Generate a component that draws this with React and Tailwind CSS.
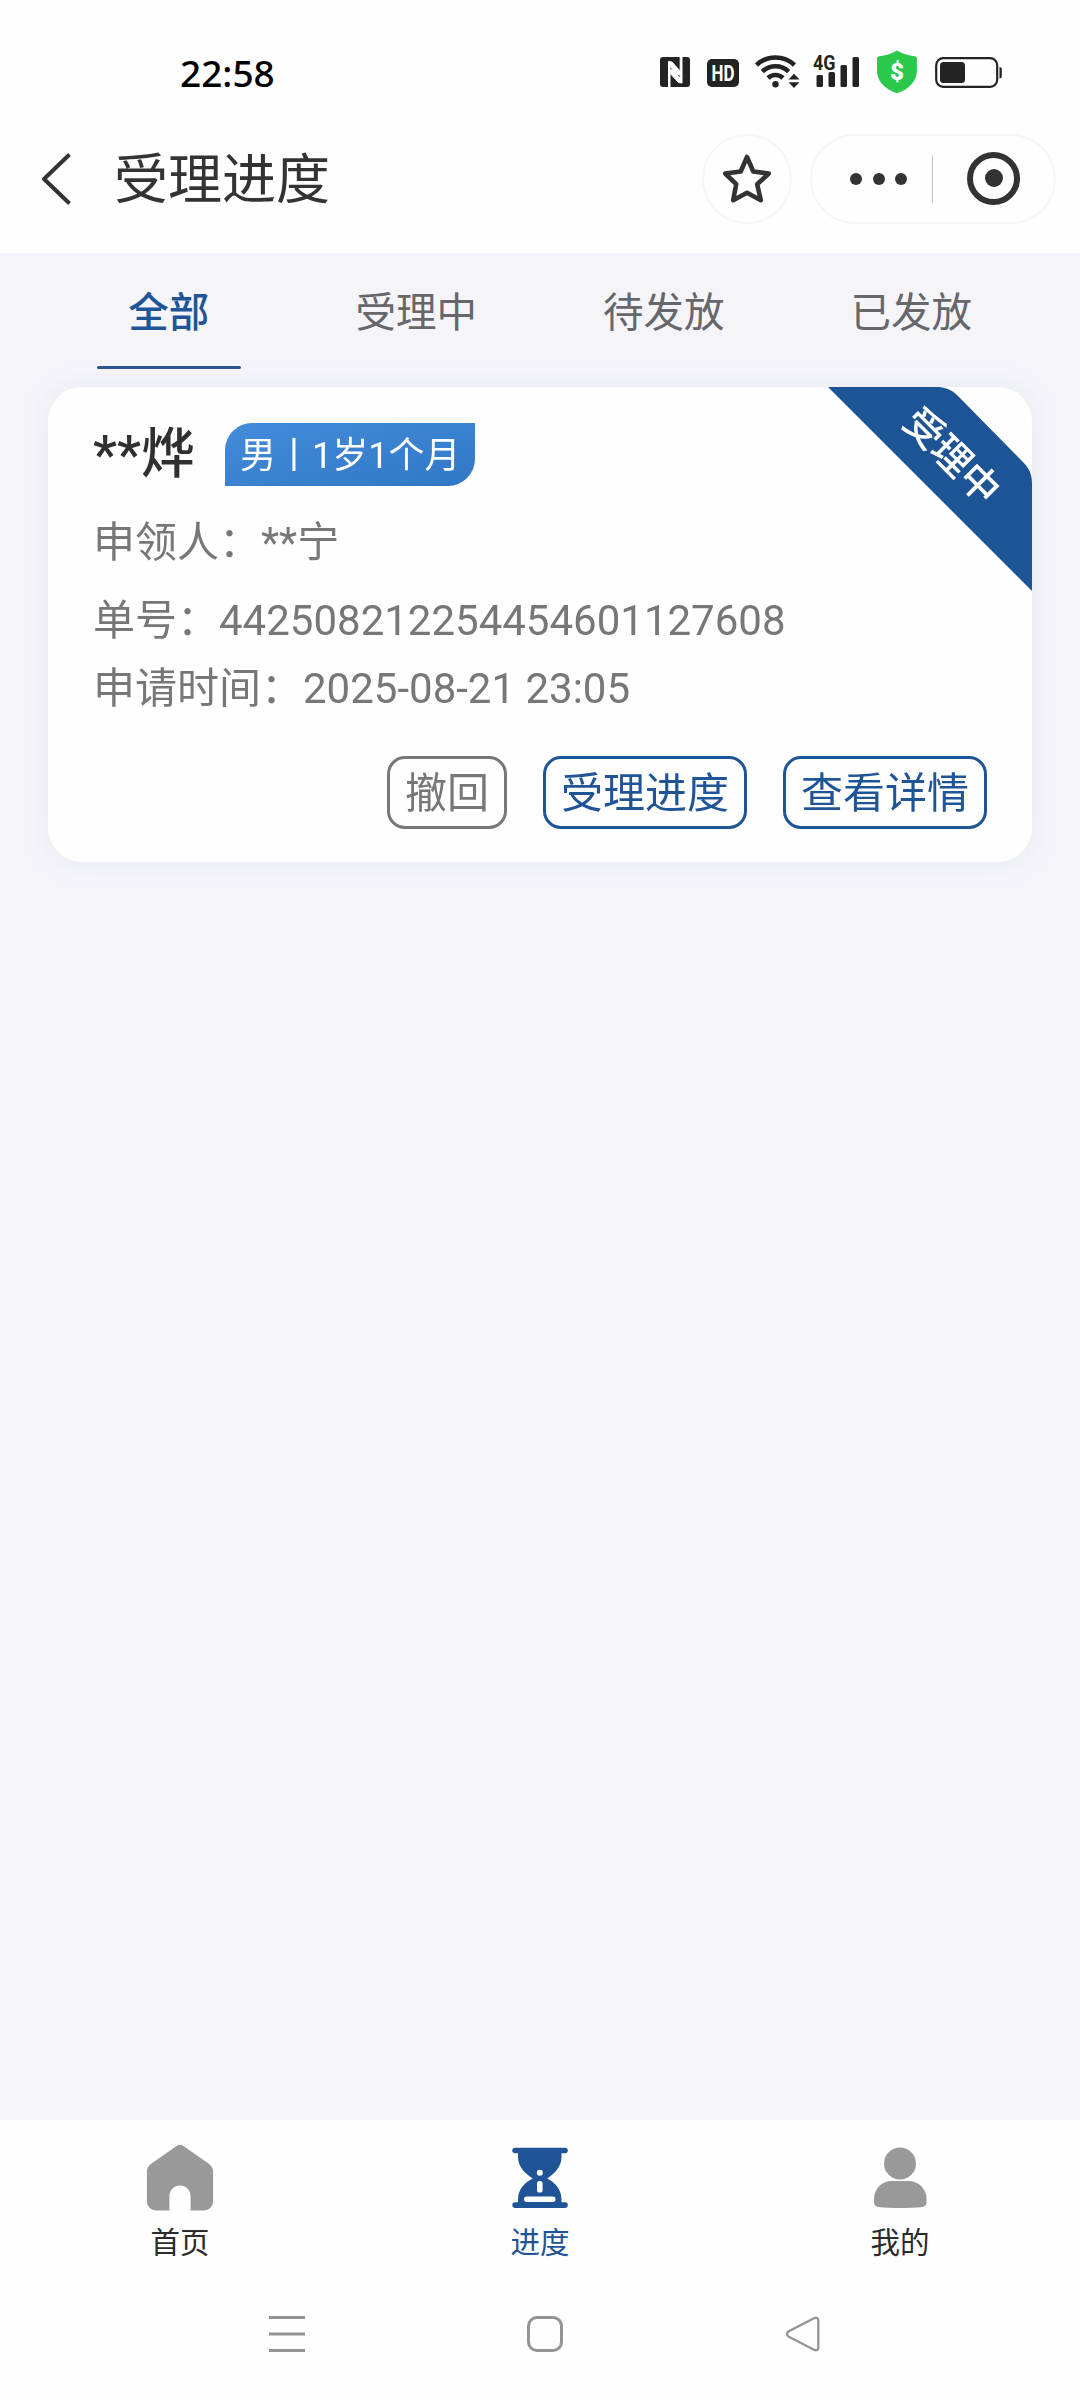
import React from "react";

const BLUE = "#1f5597";

function StatusIcons() {
  return (
    <svg className="block" width="344" height="46" viewBox="660 49 344 46">
      {/* NFC */}
      <rect x="660" y="57" width="30" height="30" rx="3" fill="#232323" />
      <path d="M668.500 87V61.500L672 62l8 9v4l-3-1-7-7.500V87zM682 57V83l-3.500-.5-7.800-8.500v-4.500l3 1.500 6.500 7V57z" fill="#fff" stroke="#fff" strokeWidth="1" />
      {/* HD */}
      <rect x="707" y="59" width="32" height="28" rx="5" fill="#232323" />
      <text x="723" y="80.8" textAnchor="middle" fontFamily="Roboto, sans-serif" fontWeight="700" fontSize="21.5" textLength="23" lengthAdjust="spacingAndGlyphs" fill="#fff">HD</text>
      {/* Wi-Fi */}
      <g fill="none" stroke="#232323" strokeWidth="4.500">
        <path d="M756.5 65a27.5 27.5 0 0 1 38 0" />
        <path d="M762.3 71.600a19 19 0 0 1 26.4 0" />
        <path d="M768 78a11 11 0 0 1 15 0" />
      </g>
      <circle cx="775.5" cy="84.3" r="3.200" fill="#232323" />
      <path d="M788.500 79.5l5.500-5.8 5.500 5.8zM788.500 82.2l5.500 5.8 5.500-5.8z" fill="#232323" />
      {/* Signal */}
      <text x="813" y="70.4" fontFamily="Roboto, sans-serif" fontWeight="700" fontSize="20.5" textLength="22.5" lengthAdjust="spacingAndGlyphs" fill="#232323">4G</text>
      <g fill="#232323">
        <rect x="816.5" y="75" width="6.500" height="12" rx="1.5" />
        <rect x="828.5" y="72" width="6.500" height="15" rx="1.5" />
        <rect x="840.5" y="65" width="6.500" height="22" rx="1.5" />
        <rect x="852.5" y="57" width="6.500" height="30" rx="1.5" />
      </g>
      {/* Payment shield */}
      <path d="M897 50.5c5.500 3.500 12 5.200 17.500 5.700 1.500.2 2.400 1 2.400 2.600V71c0 10-7.500 18-19.900 22.300C884.600 89 877 81 877 71V58.800c0-1.600.9-2.400 2.400-2.600 5.600-.5 12.100-2.200 17.600-5.700z" fill="#2ac94c" />
      <text x="897" y="79.800" textAnchor="middle" fontFamily="Roboto, sans-serif" fontWeight="900" fontSize="24" fill="#fff">$</text>
      {/* Battery */}
      <rect x="936.200" y="58.200" width="61" height="28.600" rx="7" fill="none" stroke="#232323" strokeWidth="2.200" />
      <rect x="940" y="62" width="25" height="21" rx="3.500" fill="#232323" />
      <path d="M999.500 67c1.600 0 2.300 1 2.300 2.200v7c0 1.200-.7 2.200-2.300 2.200z" fill="#232323" />
    </svg>
  );
}

function Header() {
  return (
    <header className="h-[253px] bg-[#fefefe]">
      <div className="flex h-[112px] items-start justify-between pl-[180px] pr-[76px] pt-[49px]">
        <span className="font-['Noto_Sans'] text-[37px] font-medium leading-[47px] text-black">22:58</span>
        <StatusIcons />
      </div>
      <div className="flex h-[134px] items-center pl-[40px] pr-[24px]">
        <svg className="block" width="34" height="52" viewBox="0 0 34 52">
          <path d="M29.500 1.500L4 26l25.500 24.500" fill="none" stroke="#333" strokeWidth="4" strokeLinejoin="round" />
        </svg>
        <h1 className="ml-[40px] pt-[3px] text-[54px] leading-[60px] text-[#333]">受理进度</h1>
        <div className="ml-auto flex gap-[18px]">
          <button className="grid size-[90px] place-items-center rounded-full border-2 border-[#f6f6f6]">
            <svg className="block" width="54" height="54" viewBox="0 0 54 54">
              <path d="M27 5l6.300 14.500 15.500 2-11.600 10.700 3.600 16L27 40.800l-13.800 7.400 3-16L5.200 21.500l15.500-2z" fill="none" stroke="#333" strokeWidth="4.600" strokeLinejoin="round" />
            </svg>
          </button>
          <div className="flex h-[90px] w-[246px] items-center rounded-full border-2 border-[#f6f6f6] pl-[38px]">
            <div className="flex gap-[10.500px]">
              <i className="size-3 rounded-full bg-[#333]" />
              <i className="size-3 rounded-full bg-[#333]" />
              <i className="size-3 rounded-full bg-[#333]" />
            </div>
            <i className="ml-[25px] h-12 w-px bg-[#c4c4c4]" />
            <div className="-mt-[2px] ml-[34px] grid size-[53px] place-items-center rounded-full border-[6px] border-[#333]">
              <i className="size-[18px] rounded-full bg-[#333]" />
            </div>
          </div>
        </div>
      </div>
    </header>
  );
}

function Tabs() {
  const tabs = ["全部", "受理中", "待发放", "已发放"];
  return (
    <nav className="grid h-[134px] grid-cols-4 px-[45px]">
      {tabs.map((t, i) => (
        <div key={t} className={"flex flex-col items-center pt-[30px] text-[40.500px] leading-[60px] " + (i === 0 ? "font-medium text-[#1f5597]" : "text-[#66666b]")}>
          <span>{t}</span>
          {i === 0 && <i className="mt-[23px] h-[3px] w-[144px] rounded-full bg-[#2a5590]" />}
        </div>
      ))}
    </nav>
  );
}

function Ribbon() {
  return (
    <div className="absolute right-0 top-0 h-[204px] w-[204px]">
      <svg className="block" width="204" height="204" viewBox="0 0 204 204">
        <path d="M0 0H108c9 0 15.500 2.500 22 9L193 73c7.500 7.500 11 13 11 23V204z" fill="#1d5496" />
      </svg>
      <span className="absolute left-[123px] top-[70px] -translate-x-1/2 -translate-y-1/2 rotate-45 whitespace-nowrap text-[39px] font-medium leading-none text-white">受理中</span>
    </div>
  );
}

function Button({ children, muted }) {
  return (
    <button className={"h-[73px] rounded-[18px] border-[3px] px-[15px] text-[42px] leading-[69px] " + (muted ? "border-[#757779] text-[#757779]" : "border-[#1f5597] text-[#1f5597]")}>
      {children}
    </button>
  );
}

function Card() {
  return (
    <section className="relative mx-12 h-[475px] overflow-hidden rounded-[34px] bg-[#fefefe] pl-[45px] pr-[45px] pt-[36px]">
      <Ribbon />
      <div className="flex h-[63px] items-center">
        <h2 className="w-[132px] text-[54px] font-medium leading-[60px] text-[#303030]">**烨</h2>
        <span className="h-[63px] w-[250px] rounded-br-[27px] rounded-tl-[27px] bg-linear-to-br from-[#448cdb] to-[#3078c6] pl-[15px] text-[36px] leading-[66px] text-white">男丨1岁1个月</span>
      </div>
      <dl className="text-[42px] text-[#757779]">
        <div className="mt-[24px] flex leading-[66px]"><dt>申领人：</dt><dd>**宁</dd></div>
        <div className="mt-[12px] flex leading-[66px]"><dt>单号：</dt><dd>442508212254454601127608</dd></div>
        <div className="mt-[2px] flex leading-[66px]"><dt>申请时间：</dt><dd>2025-08-21 23:05</dd></div>
      </dl>
      <div className="mt-[34px] flex justify-end gap-[36px]">
        <Button muted>撤回</Button>
        <Button>受理进度</Button>
        <Button>查看详情</Button>
      </div>
    </section>
  );
}

function HomeIcon() {
  return (
    <svg className="block" width="72" height="72" viewBox="0 0 72 72">
      <path d="M33 4.800a5 5 0 0 1 6 0L64.500 22.500c3 2.200 4.600 5 4.600 8.500V60.500a9 9 0 0 1-9 9H46.600V55a10.600 10.600 0 0 0-21.200 0V69.500H11.900a9 9 0 0 1-9-9V31c0-3.500 1.600-6.300 4.600-8.500z" fill="#999" />
    </svg>
  );
}

function HourglassIcon() {
  return (
    <svg className="block" width="72" height="72" viewBox="0 0 72 72">
      <g fill={BLUE}>
        <rect x="8.300" y="6.700" width="55.500" height="5.600" rx="2.800" />
        <rect x="8.300" y="61.300" width="55.500" height="5.600" rx="2.800" />
        <path d="M14 9H57.500V16c0 9-6 16-14.200 21.500C51.500 42 57.500 49 57.500 58v5H14V58c0-9 6-16 14.700-20.500C20 32 14 25 14 16z" />
      </g>
      <circle cx="35.800" cy="31.800" r="3" fill="#fff" />
      <rect x="33" y="40" width="5.600" height="11.500" rx="2.600" fill="#fff" />
      <rect x="20" y="55.500" width="31.500" height="5.400" rx="2.600" fill="#fff" />
    </svg>
  );
}

function PersonIcon() {
  return (
    <svg className="block" width="72" height="72" viewBox="0 0 72 72">
      <circle cx="36" cy="22.500" r="16" fill="#999" />
      <path d="M28 40H44C55 40 62.500 48 62.500 58V61c0 3-1.500 4.600-4.500 5-13 1.300-31 1.300-43.500 0-3-.4-4.500-2-4.500-5V58C10 48 17.500 40 28 40z" fill="#999" />
    </svg>
  );
}

function BottomTab({ icon, label, active }) {
  return (
    <div className="flex flex-col items-center pt-[21px]">
      {icon}
      <span className={"mt-[10px] text-[29.500px] leading-[40px] " + (active ? "text-[#1f5597]" : "text-[#2b2b2b]")}>{label}</span>
    </div>
  );
}

export default function App() {
  return (
    <div className="flex h-[2400px] w-[1080px] flex-col overflow-hidden bg-[#f4f4f9] font-[Roboto,'Noto_Sans_CJK_SC',sans-serif]">
      <Header />
      <Tabs />
      <div className="rounded-[34px] [filter:drop-shadow(0_0_10px_rgba(220,230,236,0.55))]">
        <Card />
      </div>
      <footer className="mt-auto h-[280px] bg-[#fefefe]">
        <div className="grid h-[196px] grid-cols-3">
          <BottomTab icon={<HomeIcon />} label="首页" />
          <BottomTab icon={<HourglassIcon />} label="进度" active />
          <BottomTab icon={<PersonIcon />} label="我的" />
        </div>
        <div className="flex pl-[269px]">
          <svg className="block" width="36" height="36" viewBox="0 0 36 36">
            <path d="M0 1.500H36M0 18H36M0 34.500H36" stroke="#949494" strokeWidth="3" />
          </svg>
          <i className="ml-[222px] size-9 rounded-[10px] border-[3px] border-[#949494]" />
          <svg className="ml-[222px] block" width="36" height="36" viewBox="0 0 36 36">
            <path d="M29 2.300L3.800 15.200c-2.400 1.300-2.400 4.300 0 5.600L29 33.700c2.400 1.200 4.300.2 4.300-2.200V4.500c0-2.400-1.900-3.400-4.300-2.200z" fill="none" stroke="#949494" strokeWidth="2.300" />
          </svg>
        </div>
      </footer>
    </div>
  );
}
